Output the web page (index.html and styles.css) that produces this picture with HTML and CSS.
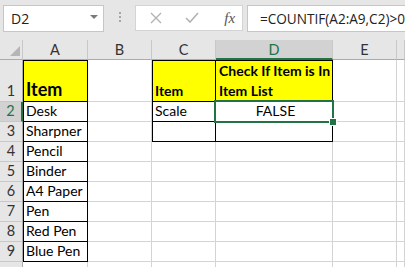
FILE: index.html
```html
<!DOCTYPE html>
<html lang="en">
<head>
  <meta charset="UTF-8">
  <title>Countif check</title>
  <link rel="stylesheet" href="styles.css">
</head>
<body>
  <div class="bar">
    <div class="namebox">
      <span class="ref">D2</span>
      <span class="caret"></span>
    </div>
    <div class="grip"><i></i><i></i><i></i></div>
    <div class="fxbtns">
      <svg class="ico" width="12" height="12" viewBox="0 0 12 12"><path d="M1 1 L11 11 M11 1 L1 11" stroke="#b3b3b3" stroke-width="1.4" fill="none"/></svg>
      <svg class="ico" width="14" height="12" viewBox="0 0 14 12"><path d="M1 6 L5 10 L13 1" stroke="#b3b3b3" stroke-width="1.6" fill="none"/></svg>
      <span class="fx">fx</span>
    </div>
    <div class="formula">=COUNTIF(A2:A9,C2)&gt;0</div>
  </div>

  <div class="sheet">
    <!-- column headers -->
    <div class="hd corner"><span class="tri"></span></div>
    <div class="hd col">A</div>
    <div class="hd col">B</div>
    <div class="hd col">C</div>
    <div class="hd col sel-col">D</div>
    <div class="hd col">E</div>
    <div class="hd col"></div>

    <!-- row 1 -->
    <div class="hd row">1</div>
    <div class="c yel bx bl bt big">Item</div>
    <div class="c"></div>
    <div class="c yel bx bl bt bold">Item</div>
    <div class="c yel bx bt bold wrap">Check If Item is In Item List</div>
    <div class="c"></div>
    <div class="c"></div>

    <!-- row 2 -->
    <div class="hd row sel-row">2</div>
    <div class="c bx bl">Desk</div>
    <div class="c"></div>
    <div class="c bx bl">Scale</div>
    <div class="c bx mid active">FALSE<span class="handle"></span></div>
    <div class="c"></div>
    <div class="c"></div>

    <!-- row 3 -->
    <div class="hd row">3</div>
    <div class="c bx bl">Sharpner</div>
    <div class="c"></div>
    <div class="c bx bl"></div>
    <div class="c bx"></div>
    <div class="c"></div>
    <div class="c"></div>

    <div class="hd row">4</div>
    <div class="c bx bl">Pencil</div>
    <div class="c"></div><div class="c"></div><div class="c"></div><div class="c"></div><div class="c"></div>

    <div class="hd row">5</div>
    <div class="c bx bl">Binder</div>
    <div class="c"></div><div class="c"></div><div class="c"></div><div class="c"></div><div class="c"></div>

    <div class="hd row">6</div>
    <div class="c bx bl">A4 Paper</div>
    <div class="c"></div><div class="c"></div><div class="c"></div><div class="c"></div><div class="c"></div>

    <div class="hd row">7</div>
    <div class="c bx bl">Pen</div>
    <div class="c"></div><div class="c"></div><div class="c"></div><div class="c"></div><div class="c"></div>

    <div class="hd row">8</div>
    <div class="c bx bl">Red Pen</div>
    <div class="c"></div><div class="c"></div><div class="c"></div><div class="c"></div><div class="c"></div>

    <div class="hd row">9</div>
    <div class="c bx bl">Blue Pen</div>
    <div class="c"></div><div class="c"></div><div class="c"></div><div class="c"></div><div class="c"></div>

    <div class="hd row"></div>
    <div class="c"></div><div class="c"></div><div class="c"></div><div class="c"></div><div class="c"></div><div class="c"></div>
  </div>
</body>
</html>
```

FILE: styles.css
```css
body {
  margin: 0;
  background: #e6e6e6;
  font-family: Lato, 'Liberation Sans', sans-serif;
  overflow: hidden;
}

/* formula bar */
.bar {
  height: 40px;
  display: flex;
  align-items: flex-start;
  padding: 5px 0 0 3px;
  box-sizing: border-box;
}
.namebox {
  width: 102px;
  height: 27px;
  box-sizing: border-box;
  background: #fff;
  border: 1px solid #c6c6c6;
  display: flex;
  align-items: center;
  justify-content: space-between;
  padding: 0 5px 0 7px;
  font-family: 'Open Sans', sans-serif;
  font-size: 14px;
  color: #222;
}
.caret {
  width: 0;
  height: 0;
  border-left: 4px solid transparent;
  border-right: 4px solid transparent;
  border-top: 4px solid #7a7a7a;
  margin-bottom: 3px;
}
.grip {
  width: 32px;
  display: flex;
  flex-direction: column;
  align-items: center;
  gap: 2px;
  padding-top: 7px;
}
.grip i {
  width: 2px;
  height: 2px;
  background: #a6a6a6;
}
.fxbtns {
  width: 109px;
  height: 26px;
  box-sizing: border-box;
  background: #fff;
  border: 1px solid #d4d4d4;
  display: flex;
  align-items: center;
  padding-left: 14px;
  gap: 23px;
}
.fx {
  font-family: 'Liberation Serif', serif;
  font-style: italic;
  font-size: 15px;
  color: #555;
  margin-left: 2px;
}
.formula {
  margin-left: 4px;
  flex: 1;
  height: 27px;
  box-sizing: border-box;
  background: #fff;
  border: 1px solid #c6c6c6;
  border-right: none;
  padding-left: 12px;
  display: flex;
  align-items: center;
  font-family: 'Open Sans', sans-serif;
  font-size: 13.6px;
  color: #222;
  white-space: nowrap;
}

/* sheet grid */
.sheet {
  display: grid;
  grid-template-columns: 23px 65px 64px 64px 117px 64px 1fr;
  grid-template-rows: 20px 42px repeat(9, 20px);
  background: #fff;
}
.hd {
  background: #e6e6e6;
  color: #333;
  font-size: 14.5px;
  box-sizing: border-box;
  display: flex;
  justify-content: center;
}
.col {
  border-right: 1px solid #c8c8c8;
  border-bottom: 1px solid #ababab;
  align-items: center;
}
.corner {
  border-right: 1px solid #c8c8c8;
  border-bottom: 1px solid #ababab;
  justify-content: flex-end;
  align-items: flex-end;
  padding: 0 2px 3px 0;
}
.tri {
  width: 0;
  height: 0;
  border-left: 10px solid transparent;
  border-bottom: 10px solid #b5b5b5;
}
.row {
  border-right: 1px solid #ababab;
  border-bottom: 1px solid #c8c8c8;
  align-items: flex-end;
  line-height: 20px;
}
.sel-col {
  background: #d2d2d2;
  color: #217346;
  border-bottom: 2px solid #217346;
}
.sel-row {
  background: #d2d2d2;
  color: #217346;
  border-right: 2px solid #217346;
}

.c {
  box-sizing: border-box;
  border-right: 1px solid #d4d4d4;
  border-bottom: 1px solid #d4d4d4;
  font-size: 14px;
  color: #000;
  padding: 0 0 0 3px;
  line-height: 20px;
  display: flex;
  align-items: flex-end;
  white-space: nowrap;
}
.yel { background: #ffff00; }
.bx {
  border-right-color: #000;
  border-bottom-color: #000;
}
.bl { box-shadow: inset 1px 0 0 #000; }
.bt { box-shadow: inset 0 1px 0 #000; }
.bl.bt { box-shadow: inset 1px 1px 0 #000; }
.big {
  font-size: 18px;
  font-weight: bold;
  line-height: 24px;
}
.bold { font-weight: bold; }
.wrap {
  white-space: normal;
  line-height: 20px;
  padding-right: 0;
}
.mid { justify-content: center; }

.active { position: relative; }
.active::after {
  content: "";
  position: absolute;
  top: -2px;
  left: -2px;
  right: -2px;
  bottom: -2px;
  border: 2px solid #217346;
}
.handle {
  position: absolute;
  right: -5px;
  bottom: -5px;
  width: 6px;
  height: 6px;
  background: #217346;
  border: 1px solid #fff;
  z-index: 2;
}
```
